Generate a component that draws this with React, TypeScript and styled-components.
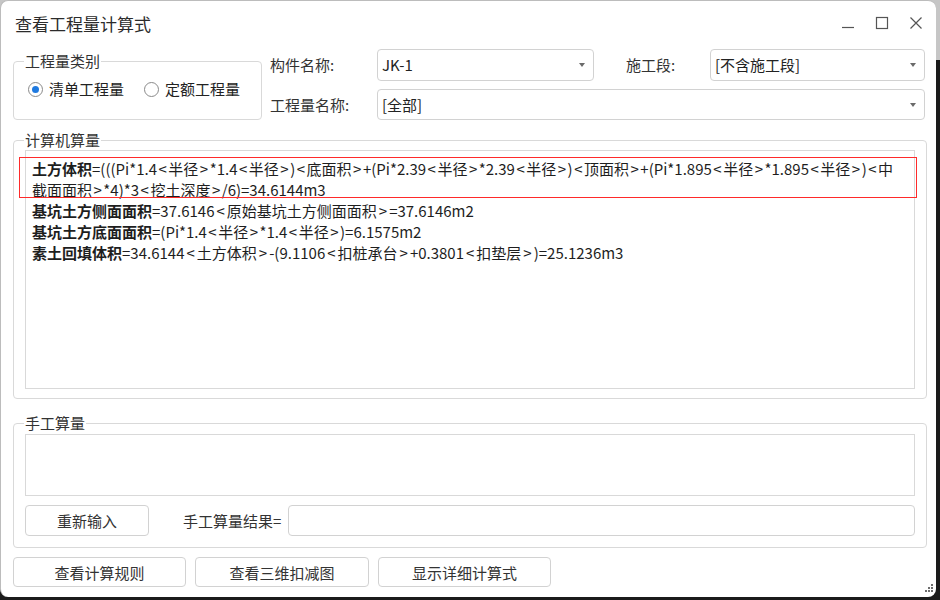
import React from 'react'
import styled, { createGlobalStyle, css } from 'styled-components'

const GlobalStyle = createGlobalStyle`
  html, body {
    margin: 0;
    padding: 0;
  }
  body {
    width: 940px;
    height: 600px;
    overflow: hidden;
    background: linear-gradient(to bottom, #c6c6c6 0, #c6c6c6 60px, #1b1b1b 60px);
    font-family: "Noto Sans CJK SC", "Noto Sans", sans-serif;
    color: #222;
  }
`

const Window = styled.div`
  position: relative;
  width: 936px;
  height: 597px;
  box-sizing: border-box;
  background: #fff;
  border: 1px solid #bcbcbc;
  border-right: none;
  border-bottom: none;
  border-radius: 8px;
  display: flex;
  flex-direction: column;
  font-size: 15px;
`

const TitleBar = styled.div`
  height: 48px;
  display: flex;
  align-items: center;
  padding-left: 14px;
`

const Title = styled.div`
  flex: 1;
  font-size: 17px;
  color: #2b2b2b;
  line-height: 24px;
  margin-top: -2px;
`

const WindowButtons = styled.div`
  display: flex;
  align-items: center;
  gap: 14px;
  padding-right: 10px;
  margin-top: -4px;
`

const WindowButton = styled.span`
  width: 20px;
  height: 20px;
  display: flex;
  align-items: center;
  justify-content: center;
  color: #555;
`

const Content = styled.div`
  flex: 1;
  display: flex;
  flex-direction: column;
  padding: 0 9px 0 12px;
`

const TopRow = styled.div`
  display: flex;
  align-items: flex-start;
  gap: 8px;
`

const Group = styled.fieldset`
  margin: 0;
  min-width: 0;
  border: 1px solid #d9d9d9;
  border-radius: 4px;
  padding: 0 11px 8px 11px;
`

const Legend = styled.legend`
  padding: 0 1px;
  margin-left: -1px;
  font-size: 15px;
  line-height: 20px;
  color: #333;
`

const KindGroup = styled(Group)`
  width: 249px;
  box-sizing: border-box;
  height: 69px;
  margin-top: 2px;
  padding: 0 11px;
`

const RadioRow = styled.div`
  display: flex;
  align-items: center;
  gap: 20px;
  margin-top: 8px;
  padding-left: 3px;
`

const RadioItem = styled.label`
  display: flex;
  align-items: center;
  gap: 6px;
  line-height: 20px;
  color: #222;
`

const RadioCircle = styled.span<{ $checked?: boolean }>`
  width: 15px;
  height: 15px;
  box-sizing: border-box;
  border-radius: 50%;
  border: 1px solid #8a8a8a;
  display: flex;
  align-items: center;
  justify-content: center;

  &::after {
    content: '';
    width: 7px;
    height: 7px;
    border-radius: 50%;
    background: ${({ $checked }) => ($checked ? '#1f7ae0' : 'transparent')};
  }
`

const FieldGrid = styled.div`
  flex: 1;
  display: grid;
  grid-template-columns: 107px 217px 116px 215px;
  grid-template-rows: 32px 31px;
  row-gap: 8px;
  align-items: center;
`

const FieldLabel = styled.span<{ $indent?: number }>`
  padding-left: ${({ $indent }) => $indent ?? 0}px;
  color: #333;
  line-height: 20px;
`

const Select = styled.div<{ $span?: number }>`
  grid-column: span ${({ $span }) => $span ?? 1};
  height: 100%;
  box-sizing: border-box;
  border: 1px solid #d2d2d2;
  border-radius: 4px;
  display: flex;
  align-items: center;
  padding: 0 8px 0 4px;
  color: #222;
`

const SelectValue = styled.span`
  flex: 1;
  line-height: 20px;
`

const Caret = styled.span`
  width: 0;
  height: 0;
  border-left: 3px solid transparent;
  border-right: 3px solid transparent;
  border-top: 4px solid #6a6a6a;
`

const CalcGroup = styled(Group)`
  margin-top: 10px;
  padding: 0 11px 9px 11px;
`

const OutputBox = styled.div`
  position: relative;
  height: 239px;
  box-sizing: border-box;
  border: 1px solid #d9d9d9;
  padding: 7px 6px 0 6px;
`

const Formula = styled.div`
  line-height: 21px;
  font-size: 15px;
  color: #1e1e1e;
`

const HighlightFrame = styled.div`
  position: absolute;
  top: 6px;
  left: -7px;
  right: -3px;
  height: 41px;
  box-sizing: border-box;
  border: 1px solid #ff2a2a;
  pointer-events: none;
`

const FormulaName = styled.b`
  font-weight: 700;
`

const Angle = styled.span<{ $tight?: boolean }>`
  ${({ $tight }) => css`
    margin: 0 ${$tight ? 1.5 : 2}px;
  `}
`

const ManualGroup = styled(Group)`
  margin-top: 14px;
  padding: 0 11px 11px 11px;
`

const ManualArea = styled.div`
  height: 62px;
  box-sizing: border-box;
  border: 1px solid #d9d9d9;
  margin-top: 1px;
`

const ManualRow = styled.div`
  display: flex;
  align-items: center;
  margin-top: 9px;
  height: 31px;
`

const Button = styled.button<{ $width?: number }>`
  width: ${({ $width }) => $width ?? 173}px;
  height: 100%;
  box-sizing: border-box;
  background: #fff;
  border: 1px solid #d2d2d2;
  border-radius: 4px;
  font-family: inherit;
  font-size: 15px;
  color: #333;
  padding: 0;
`

const ResultLabel = styled.span`
  margin-left: 34px;
  margin-right: 7px;
  color: #333;
`

const ResultInput = styled.div`
  flex: 1;
  height: 100%;
  box-sizing: border-box;
  border: 1px solid #d2d2d2;
  border-radius: 4px;
`

const FooterRow = styled.div`
  display: flex;
  gap: 9px;
  height: 30px;
  margin-top: 9px;
`

const Grip = styled.svg`
  position: absolute;
  right: 3px;
  bottom: 3px;
`

const formulas = [
  {
    name: '土方体积',
    expr: '=(((Pi*1.4<半径>*1.4<半径>)<底面积>+(Pi*2.39<半径>*2.39<半径>)<顶面积>+(Pi*1.895<半径>*1.895<半径>)<中截面面积>*4)*3<挖土深度>/6)=34.6144m3',
    tight: true,
  },
  { name: '基坑土方侧面面积', expr: '=37.6146<原始基坑土方侧面面积>=37.6146m2' },
  { name: '基坑土方底面面积', expr: '=(Pi*1.4<半径>*1.4<半径>)=6.1575m2', tight: true },
  { name: '素土回填体积', expr: '=34.6144<土方体积>-(9.1106<扣桩承台>+0.3801<扣垫层>)=25.1236m3' },
]

const renderExpr = (expr: string, tight?: boolean) =>
  expr.split(/([<>])/).map((part, i) =>
    part === '<' || part === '>' ? (
      <Angle key={i} $tight={tight}>{part}</Angle>
    ) : (
      <React.Fragment key={i}>{part}</React.Fragment>
    )
  )

const App = () => {
  return (
    <>
      <GlobalStyle />
      <Window>
        <TitleBar>
          <Title>查看工程量计算式</Title>
          <WindowButtons>
            <WindowButton>
              <svg width="14" height="14" viewBox="0 0 14 14">
                <line x1="1" y1="11.5" x2="13" y2="11.5" stroke="currentColor" strokeWidth="1.2" />
              </svg>
            </WindowButton>
            <WindowButton>
              <svg width="14" height="14" viewBox="0 0 14 14">
                <rect x="1.5" y="1.5" width="11" height="11" fill="none" stroke="currentColor" strokeWidth="1.2" />
              </svg>
            </WindowButton>
            <WindowButton>
              <svg width="14" height="14" viewBox="0 0 14 14">
                <path d="M1.5 1.5 L12.5 12.5 M12.5 1.5 L1.5 12.5" stroke="currentColor" strokeWidth="1.2" />
              </svg>
            </WindowButton>
          </WindowButtons>
        </TitleBar>

        <Content>
          <TopRow>
            <KindGroup>
              <Legend>工程量类别</Legend>
              <RadioRow>
                <RadioItem>
                  <RadioCircle $checked />
                  清单工程量
                </RadioItem>
                <RadioItem>
                  <RadioCircle />
                  定额工程量
                </RadioItem>
              </RadioRow>
            </KindGroup>

            <FieldGrid>
              <FieldLabel>构件名称:</FieldLabel>
              <Select>
                <SelectValue>JK-1</SelectValue>
                <Caret />
              </Select>
              <FieldLabel $indent={32}>施工段:</FieldLabel>
              <Select>
                <SelectValue>[不含施工段]</SelectValue>
                <Caret />
              </Select>
              <FieldLabel>工程量名称:</FieldLabel>
              <Select $span={3}>
                <SelectValue>[全部]</SelectValue>
                <Caret />
              </Select>
            </FieldGrid>
          </TopRow>

          <CalcGroup>
            <Legend>计算机算量</Legend>
            <OutputBox>
              <HighlightFrame />
              {formulas.map(f => (
                <Formula key={f.name}>
                  <FormulaName>{f.name}</FormulaName>
                  {renderExpr(f.expr, f.tight)}
                </Formula>
              ))}
            </OutputBox>
          </CalcGroup>

          <ManualGroup>
            <Legend>手工算量</Legend>
            <ManualArea />
            <ManualRow>
              <Button $width={124}>重新输入</Button>
              <ResultLabel>手工算量结果=</ResultLabel>
              <ResultInput />
            </ManualRow>
          </ManualGroup>

          <FooterRow>
            <Button>查看计算规则</Button>
            <Button $width={174}>查看三维扣减图</Button>
            <Button>显示详细计算式</Button>
          </FooterRow>
        </Content>

        <Grip width="10" height="10" viewBox="0 0 10 10">
          <g fill="#6d6d6d">
            <rect x="8" y="0" width="2" height="2" />
            <rect x="5" y="3" width="2" height="2" />
            <rect x="8" y="3" width="2" height="2" />
            <rect x="2" y="6" width="2" height="2" />
            <rect x="5" y="6" width="2" height="2" />
            <rect x="8" y="6" width="2" height="2" />
          </g>
        </Grip>
      </Window>
    </>
  )
}

export default App
